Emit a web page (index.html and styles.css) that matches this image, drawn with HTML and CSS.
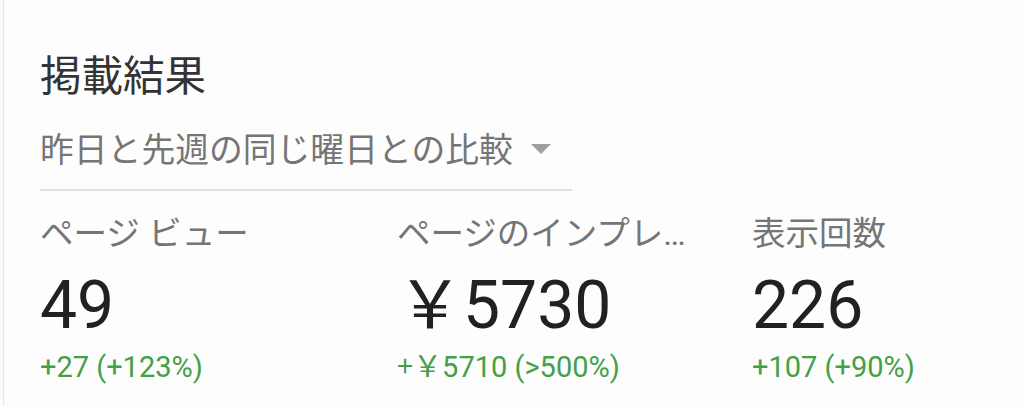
FILE: index.html
```html
<!DOCTYPE html>
<html lang="ja">
<head>
<meta charset="utf-8">
<link rel="stylesheet" href="styles.css">
</head>
<body>
<div class="card">
  <h1 class="title">掲載結果</h1>
  <div class="picker">
    <span class="picker-text">昨日と先週の同じ曜日との比較</span>
    <svg class="caret" width="20" height="10" viewBox="0 0 20 10"><path d="M0 0 H20 L10 10 Z" fill="#9e9e9e"/></svg>
  </div>
  <div class="divider"></div>
  <div class="stats">
    <div class="stat">
      <div class="label">ページ ビュー</div>
      <div class="value">49</div>
      <div class="delta">+27 (+123%)</div>
    </div>
    <div class="stat">
      <div class="label">ページのインプレッション収益</div>
      <div class="value"><span class="yen">￥</span>5730</div>
      <div class="delta"><span class="yen">+￥</span>5710 (&gt;500%)</div>
    </div>
    <div class="stat">
      <div class="label">表示回数</div>
      <div class="value">226</div>
      <div class="delta">+107 (+90%)</div>
    </div>
  </div>
</div>
</body>
</html>
```
FILE: styles.css
```css
html, body {
  margin: 0;
  padding: 0;
  background: #fdfdfd;
}
body {
  font-family: Roboto, "Noto Sans CJK JP", sans-serif;
  width: 1024px;
  height: 406px;
  overflow: hidden;
}
.card {
  margin-left: 3px;
  border-left: 1px solid #e6e6e6;
  padding: 44px 0 0 36px;
  height: 406px;
  box-sizing: border-box;
}
.title {
  margin: 0;
  font-family: "Noto Sans CJK JP", sans-serif;
  font-weight: 400;
  font-size: 41.5px;
  line-height: 58px;
  color: #333;
}
.picker {
  display: flex;
  align-items: center;
  margin-top: 21px;
  height: 50px;
}
.picker-text {
  font-family: "Noto Sans CJK JP", sans-serif;
  font-size: 33.8px;
  color: #757575;
  line-height: 50px;
}
.caret {
  margin-left: 18px;
  margin-top: 2px;
}
.divider {
  width: 532px;
  height: 2px;
  background: #e0e0e0;
  margin-top: 16px;
}
.stats {
  display: grid;
  grid-template-columns: 357px 355px 240px;
  margin-top: 18px;
}
.stat {
  min-width: 0;
}
.label {
  font-family: Roboto, "Noto Sans CJK JP", sans-serif;
  font-size: 33.5px;
  line-height: 50px;
  color: #757575;
  max-width: 292px;
  white-space: nowrap;
  overflow: hidden;
  text-overflow: ellipsis;
}
.value {
  font-size: 66px;
  line-height: 80px;
  color: #212121;
  margin-top: 7px;
}
.delta {
  font-size: 29px;
  line-height: 40px;
  color: #43a047;
  margin-top: 1px;
}
.yen {
  font-family: "Noto Sans CJK JP", sans-serif;
  line-height: 0;
}
```
